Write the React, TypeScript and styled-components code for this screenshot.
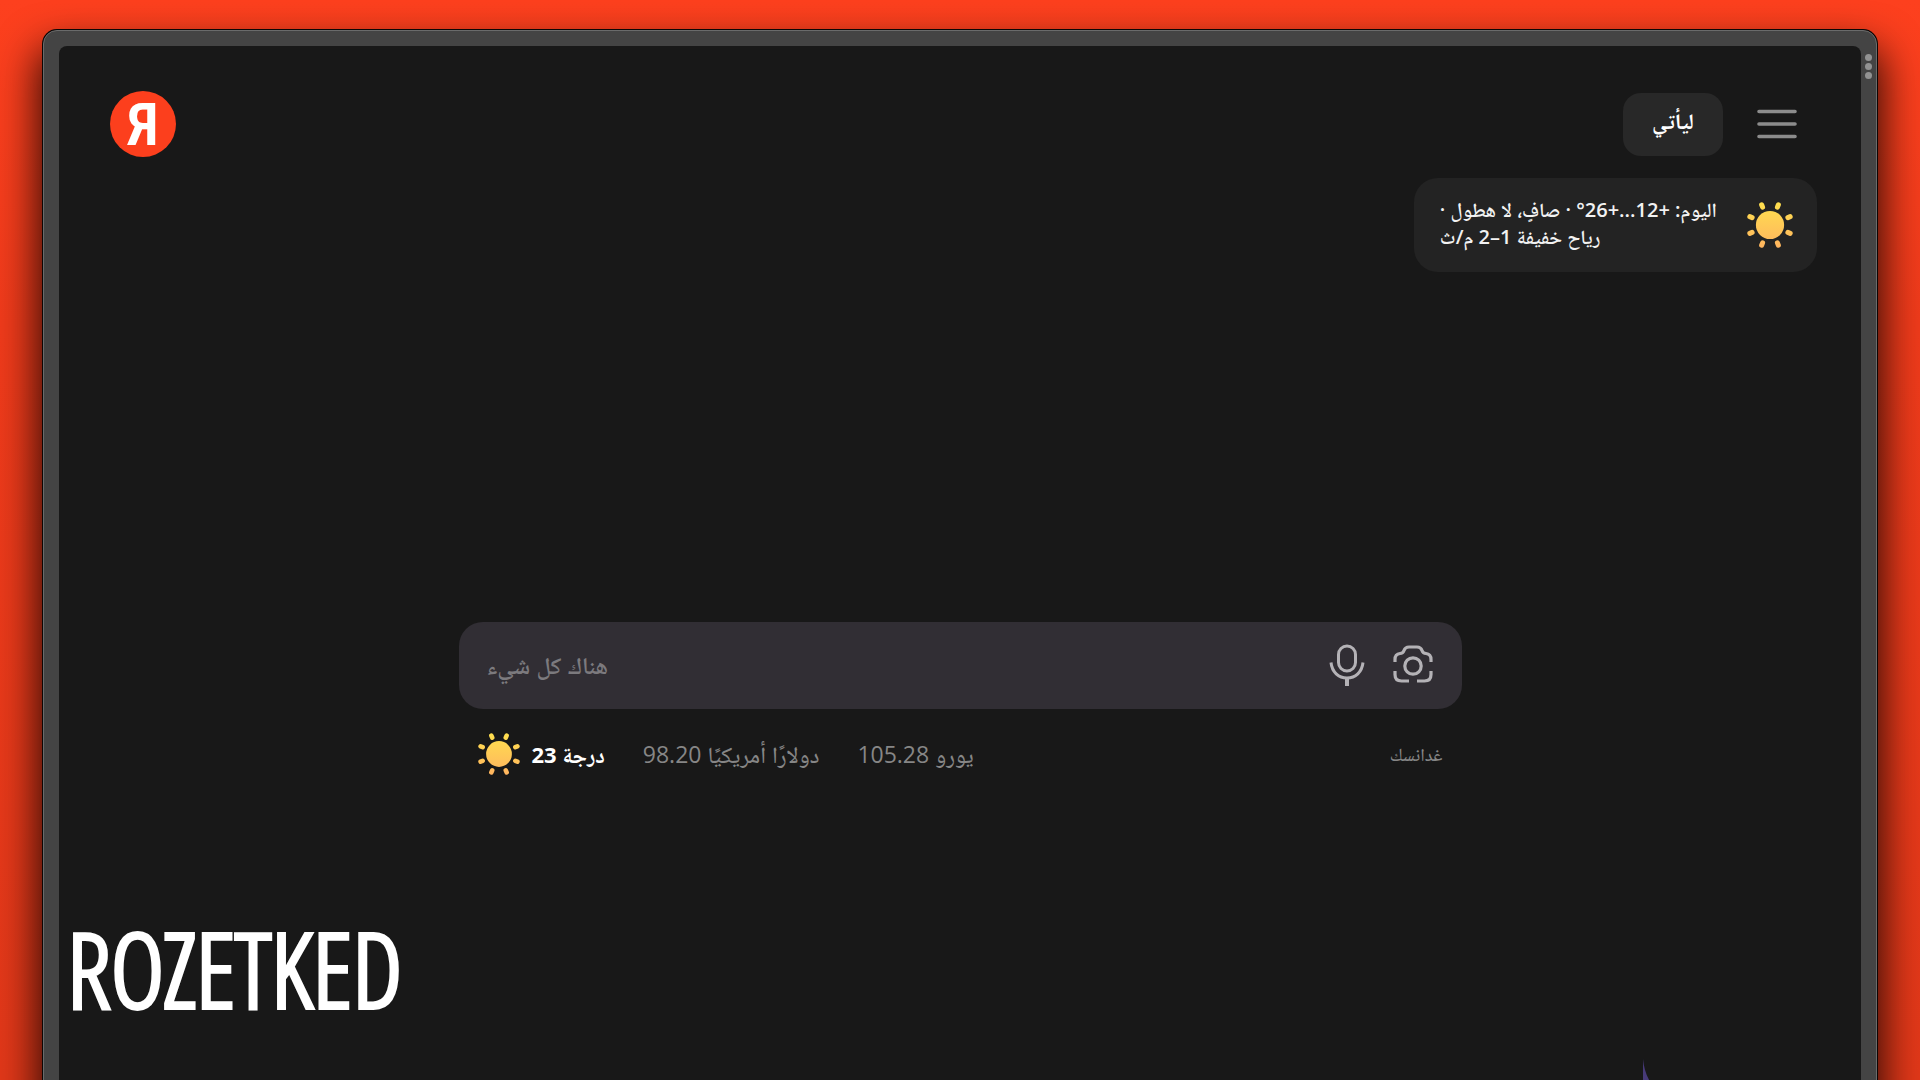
import React from "react";
import styled, { createGlobalStyle } from "styled-components";

const GlobalStyle = createGlobalStyle`
  * { box-sizing: border-box; }
  body {
    margin: 0;
    background: #fc3f1d;
    font-family: "Open Sans", "Noto Naskh Arabic", "Noto Sans", sans-serif;
    color: #fff;
  }
  button, input { font: inherit; color: inherit; }
`;

const Page = styled.div`
  height: 100vh;
  overflow: hidden;
  display: flex;
  padding: 30px 43px 0;
  background: linear-gradient(#fd401e, #f03b1b 30%, #e23819);
`;

const Device = styled.div`
  position: relative;
  flex: 1;
  display: flex;
  height: calc(100vh + 60px);
  padding: 15px 15px 0;
  border: 1px solid #6a6b6b;
  border-radius: 14px;
  background: #444;
  box-shadow: 0 0 0 1px #0c0605, 0 22px 42px 4px rgba(0, 0, 0, 0.85);
`;

const FrameMenu = styled.button`
  position: absolute;
  top: 23px;
  right: 4px;
  display: grid;
  gap: 2px;
  padding: 0;
  border: 0;
  background: none;
`;

const Dot = styled.span`
  width: 7px;
  height: 7px;
  border-radius: 50%;
  background: #929292;
`;

const Screen = styled.main`
  position: relative;
  flex: 1;
  display: flex;
  flex-direction: column;
  padding-top: 45px;
  border-radius: 8px;
  background: #181818;
`;

const Header = styled.header`
  display: flex;
  align-items: center;
  justify-content: space-between;
  padding: 0 62px 0 51px;
`;

const Emblem = styled.a`
  display: grid;
  place-items: center;
  width: 66px;
  height: 66px;
  border-radius: 50%;
  background: #fc3f1d;
  color: #fff;
  font: 600 60px/68px "Roboto Condensed", Roboto, sans-serif;
  text-decoration: none;
`;

const Actions = styled.div`
  display: flex;
  align-items: center;
  gap: 32px;
`;

const LoginButton = styled.button`
  width: 100px;
  height: 63px;
  padding: 0;
  border: 0;
  border-radius: 18px;
  background: #282828;
  font-size: 22px;
  font-weight: 700;
`;

const IconButton = styled.button<{ $tone: string }>`
  display: grid;
  place-items: center;
  padding: 0;
  border: 0;
  background: none;
  color: ${(p) => p.$tone};
`;

const Weather = styled.section`
  display: flex;
  align-items: center;
  align-self: flex-end;
  gap: 30px;
  height: 94px;
  margin: 21px 44px 0;
  padding: 0 24px 0 26px;
  border-radius: 24px;
  background: #232323;
`;

const Forecast = styled.p`
  margin: 0;
  padding-bottom: 4px;
  font-size: 20px;
  font-weight: 600;
  line-height: 27px;
  text-align: left;
  white-space: nowrap;
  color: #f2f2f2;
`;

const Center = styled.div`
  width: 100%;
  max-width: 1003px;
  margin: 350px auto 0;
`;

const SearchBox = styled.form`
  display: flex;
  align-items: center;
  gap: 24px;
  height: 87px;
  padding: 0 28px 2px;
  border-radius: 24px;
  background: #312e34;
`;

const SearchInput = styled.input`
  flex: 1;
  min-width: 0;
  height: 48px;
  padding: 0;
  border: 0;
  outline: 0;
  background: none;
  font-size: 24px;
  font-weight: 600;
  text-align: left;
  &::placeholder { color: #7c7a7e; opacity: 1; }
`;

const InfoRow = styled.div`
  display: flex;
  align-items: center;
  gap: 38px;
  height: 42px;
  margin-top: 24px;
  padding: 0 19px;
`;

const InfoLink = styled.a<{ $strong?: boolean; $small?: boolean }>`
  display: flex;
  align-items: center;
  gap: 12px;
  color: ${(p) => (p.$strong ? "#fff" : "#868686")};
  font-size: ${(p) => (p.$small ? 18 : p.$strong ? 22 : 23)}px;
  font-weight: ${(p) => (p.$strong ? 700 : 500)};
  margin-inline-start: ${(p) => (p.$small ? "auto" : 0)};
  line-height: 32px;
  text-decoration: none;
  white-space: nowrap;
`;

const Wordmark = styled.div`
  margin-top: 139px;
  padding-left: 8px;
  font: 300 103px/108px "Open Sans Condensed Light", "Open Sans Condensed", "Roboto Condensed", sans-serif;
  -webkit-text-stroke: 4px #fff;
`;

const Assistant = styled.svg`
  position: absolute;
  left: calc(100% - 218px);
  top: calc(100vh - 67px);
`;

function Sun({ size, id }: { size: number; id: string }) {
  return (
    <svg width={size} height={size} viewBox="-22 -22 44 44" aria-hidden="true">
      <defs>
        <linearGradient id={id} gradientUnits="userSpaceOnUse" x1="0" y1="-22" x2="0" y2="22">
          <stop offset="0" stopColor="#ffe04e" />
          <stop offset="1" stopColor="#ffb45f" />
        </linearGradient>
      </defs>
      <circle r="13.5" fill={`url(#${id})`} />
      <path
        d="M7.1-17.1 8-19.300 M17.1-7.1 19.300-8 M17.1 7.1 19.300 8 M7.1 17.1 8 19.300 M-7.1 17.1-8 19.300 M-17.1 7.1-19.300 8 M-17.1-7.1-19.300-8 M-7.1-17.1-8-19.300"
        stroke={`url(#${id})`}
        strokeWidth="4.800"
        strokeLinecap="round"
      />
    </svg>
  );
}

export default function App() {
  return (
    <>
      <GlobalStyle />
      <Page>
        <Device>
          <Screen>
            <Header>
              <Emblem href="#">Я</Emblem>
              <Actions>
                <LoginButton dir="rtl">ليأتي</LoginButton>
                <IconButton $tone="#8c8c8c" aria-label="menu">
                  <svg width="44" height="32" viewBox="0 0 44 32" fill="none" stroke="currentColor" strokeWidth="3.600" strokeLinecap="round">
                    <path d="M4 3.500H40M4 16H40M4 28.500H40" />
                  </svg>
                </IconButton>
              </Actions>
            </Header>
            <Weather>
              <Forecast dir="rtl">
                اليوم: +12...+26° · صافٍ، لا هطول ·<br />
                رياح خفيفة 1–2 م/ث
              </Forecast>
              <Sun size={46} id="sun-card" />
            </Weather>
            <Center>
              <SearchBox onSubmit={(e: React.FormEvent) => e.preventDefault()}>
                <SearchInput dir="rtl" placeholder="هناك كل شيء" aria-label="هناك كل شيء" />
                <IconButton type="button" $tone="#b4b2b6" aria-label="microphone">
                  <svg width="42" height="42" viewBox="0 0 42 42" fill="none" stroke="currentColor" strokeWidth="3">
                    <rect x="12.500" y="2" width="17" height="25" rx="8.500" />
                    <path d="M5 18.500C6 28 12.500 34 21 34S36 28 37 18.500" />
                    <path d="M21 34V42" strokeWidth="4" />
                  </svg>
                </IconButton>
                <IconButton type="button" $tone="#b4b2b6" aria-label="camera">
                  <svg width="42" height="42" viewBox="0 0 42 42" fill="none" stroke="currentColor" strokeWidth="3.200">
                    <circle cx="21" cy="22" r="8.200" />
                    <path d="M3 18V15.500Q3 10 8 9.500Q11 9.300 12 6.500Q13.200 3 17 3H25Q28.800 3 30 6.500Q31 9.300 34 9.500Q39 10 39 15.500V18M3 27V30.500Q3 37 9.500 37H17M25 37H32.500Q39 37 39 30.500V27" />
                  </svg>
                </IconButton>
              </SearchBox>
              <InfoRow>
                <InfoLink href="#" $strong>
                  <Sun size={42} id="sun-row" />
                  <span dir="rtl">درجة 23</span>
                </InfoLink>
                <InfoLink href="#" dir="rtl">دولارًا أمريكيًا 98.20</InfoLink>
                <InfoLink href="#" dir="rtl">يورو 105.28</InfoLink>
                <InfoLink href="#" $small>غدانسك</InfoLink>
              </InfoRow>
            </Center>
            <Wordmark>ROZETKED</Wordmark>
            <Assistant width="12" height="28" viewBox="0 0 12 28" aria-hidden="true">
              <path d="M0 0C1 10 4 20 11 28H0Z" fill="#473a78" />
            </Assistant>
          </Screen>
          <FrameMenu aria-label="window menu">
            <Dot />
            <Dot />
            <Dot />
          </FrameMenu>
        </Device>
      </Page>
    </>
  );
}
